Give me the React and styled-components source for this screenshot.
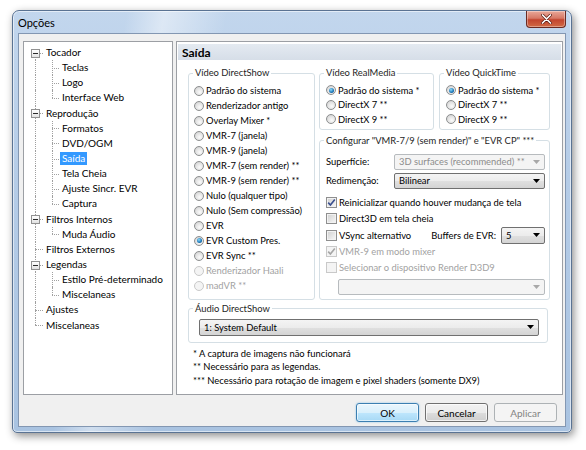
import React from 'react';
import styled, { createGlobalStyle, css } from 'styled-components';

const GlobalStyle = createGlobalStyle`
  html, body {
    margin: 0;
    padding: 0;
    background: #ffffff;
  }
  body {
    font-family: Lato, "Noto Sans", "DejaVu Sans", sans-serif;
    font-size: 10px;
    color: #000000;
  }
`;

const tree = [
    { label: 'Tocador', children: ['Teclas', 'Logo', 'Interface Web'] },
    {
        label: 'Reprodução',
        children: ['Formatos', 'DVD/OGM', 'Saída', 'Tela Cheia', 'Ajuste Sincr. EVR', 'Captura'],
    },
    { label: 'Filtros Internos', children: ['Muda Áudio'] },
    { label: 'Filtros Externos' },
    { label: 'Legendas', children: ['Estilo Pré-determinado', 'Miscelaneas'] },
    { label: 'Ajustes' },
    { label: 'Miscelaneas' },
];

const directShow = [
    { label: 'Padrão do sistema' },
    { label: 'Renderizador antigo' },
    { label: 'Overlay Mixer *' },
    { label: 'VMR-7 (janela)' },
    { label: 'VMR-9 (janela)' },
    { label: 'VMR-7 (sem render) **' },
    { label: 'VMR-9 (sem render) **' },
    { label: 'Nulo (qualquer tipo)' },
    { label: 'Nulo (Sem compressão)' },
    { label: 'EVR' },
    { label: 'EVR Custom Pres.', checked: true },
    { label: 'EVR Sync **' },
    { label: 'Renderizador Haali', disabled: true },
    { label: 'madVR **', disabled: true },
];

const altRenderers = [
    { label: 'Padrão do sistema *', checked: true },
    { label: 'DirectX 7 **' },
    { label: 'DirectX 9 **' },
];

function App() {
    return (
        <>
            <GlobalStyle />
            <Page>
                <Window>
                    <TitleBar>
                        <Title>Opções</Title>
                        <CloseButton>
                            <svg width="11" height="10" viewBox="0 0 11 10">
                                <path d="M1.5 1 L9.5 9 M9.5 1 L1.5 9" stroke="#5a1a12" strokeWidth="3" strokeLinecap="round" />
                                <path d="M1.5 1 L9.5 9 M9.5 1 L1.5 9" stroke="#ffffff" strokeWidth="1.7" strokeLinecap="round" />
                            </svg>
                        </CloseButton>
                    </TitleBar>
                    <Client>
                        <MainRow>
                            <Tree />
                            <Panel>
                                <PanelHeader>Saída</PanelHeader>
                                <PanelBody>
                                    <TopRow>
                                        <Group $w={127} $pt={4} $pr={4} $pb={4} $pl={5}>
                                            <Legend>Vídeo DirectShow</Legend>
                                            {directShow.map((o) => (
                                                <RadioOption key={o.label} {...o} />
                                            ))}
                                        </Group>
                                        <RightColumn>
                                            <RendererRow>
                                                <Group $w={115} $pt={4} $pr={4} $pb={2} $pl={6}>
                                                    <Legend>Vídeo RealMedia</Legend>
                                                    {altRenderers.map((o) => (
                                                        <RadioOption key={o.label} {...o} $h={14.5} />
                                                    ))}
                                                </Group>
                                                <Group $w={111} $pt={4} $pr={4} $pb={2} $pl={6}>
                                                    <Legend>Vídeo QuickTime</Legend>
                                                    {altRenderers.map((o) => (
                                                        <RadioOption key={o.label} {...o} $h={14.5} />
                                                    ))}
                                                </Group>
                                            </RendererRow>
                                            <Group $pt={7} $pr={4} $pb={4} $pl={6} $grow>
                                                <Legend>Configurar "VMR-7/9 (sem render)" e "EVR CP" ***</Legend>
                                                <FieldRow>
                                                    <FieldLabel>Superfície:</FieldLabel>
                                                    <Combo $w={151} $disabled>
                                                        3D surfaces (recommended) **
                                                    </Combo>
                                                </FieldRow>
                                                <FieldRow $gap={3}>
                                                    <FieldLabel>Redimenção:</FieldLabel>
                                                    <Combo $w={151}>Bilinear</Combo>
                                                </FieldRow>
                                                <CheckOption checked $gap={6}>
                                                    Reinicializar quando houver mudança de tela
                                                </CheckOption>
                                                <CheckOption>Direct3D em tela cheia</CheckOption>
                                                <BufferRow>
                                                    <CheckOption>VSync alternativo</CheckOption>
                                                    <BufferLabel>Buffers de EVR:</BufferLabel>
                                                    <Combo $w={44} $h={17}>
                                                        5
                                                    </Combo>
                                                </BufferRow>
                                                <CheckOption checked disabled>
                                                    VMR-9 em modo mixer
                                                </CheckOption>
                                                <CheckOption disabled>Selecionar o dispositivo Render D3D9</CheckOption>
                                                <DeviceCombo>
                                                    <Combo $w={207} $disabled />
                                                </DeviceCombo>
                                            </Group>
                                        </RightColumn>
                                    </TopRow>
                                    <Group $pt={4} $pr={4} $pb={6} $pl={10} $mt={3}>
                                        <Legend>Áudio DirectShow</Legend>
                                        <Combo $w={340} $h={17}>
                                            1: System Default
                                        </Combo>
                                    </Group>
                                    <Notes>
                                        <div>* A captura de imagens não funcionará</div>
                                        <div>** Necessário para as legendas.</div>
                                        <div>*** Necessário para rotação de imagem e pixel shaders (somente DX9)</div>
                                    </Notes>
                                </PanelBody>
                            </Panel>
                        </MainRow>
                        <ButtonRow>
                            <Button $default>OK</Button>
                            <Button>Cancelar</Button>
                            <Button $disabled>Aplicar</Button>
                        </ButtonRow>
                    </Client>
                </Window>
            </Page>
        </>
    );
}

function Tree() {
    const rows = [];
    tree.forEach((node, i) => {
        const first = i === 0;
        const last = i === tree.length - 1;
        rows.push(
            <TreeRow key={`r${i}`}>
                <Gutter $w={18} $x={9} $v={first ? 'bottom' : last ? 'top' : 'full'} $h>
                    {node.children && <ExpandBox />}
                </Gutter>
                <TreeLabel>{node.label}</TreeLabel>
            </TreeRow>
        );
        (node.children || []).forEach((child, j) => {
            const lastChild = j === node.children.length - 1;
            rows.push(
                <TreeRow key={`r${i}c${j}`}>
                    <Gutter $w={18} $x={9} $v={last ? 'none' : 'full'} />
                    <Gutter $w={16} $x={8} $v={lastChild ? 'top' : 'full'} $h />
                    <TreeLabel $selected={child === 'Saída'}>{child}</TreeLabel>
                </TreeRow>
            );
        });
    });
    return <TreeBox>{rows}</TreeBox>;
}

function RadioOption({ label, checked, disabled, $h }) {
    return (
        <OptionRow $h={$h} $disabled={disabled}>
            <RadioMark $checked={checked} $disabled={disabled} />
            {label}
        </OptionRow>
    );
}

function CheckOption({ children, checked, disabled, $gap }) {
    return (
        <OptionRow $h={16} $disabled={disabled} $mt={$gap}>
            <CheckMark $disabled={disabled}>
                {checked && (
                    <svg width="9" height="9" viewBox="0 0 9 9">
                        <path
                            d="M1.2 4.6 L3.4 7 L7.8 1.4"
                            fill="none"
                            stroke={disabled ? '#a6a6a6' : '#3a4f8f'}
                            strokeWidth="1.6"
                        />
                    </svg>
                )}
            </CheckMark>
            {children}
        </OptionRow>
    );
}

export default App;

const Page = styled.div`
    width: 586px;
    height: 450px;
    padding: 10px 0 0 12px;
    box-sizing: border-box;
    overflow: hidden;
`;

const Window = styled.div`
    width: 560px;
    height: 423px;
    box-sizing: border-box;
    display: flex;
    flex-direction: column;
    padding: 0 5px 5px 5px;
    border: 1px solid #5a7393;
    border-radius: 7px 7px 5px 5px;
    background:
        linear-gradient(100deg, rgba(255, 255, 255, 0) 18%, rgba(255, 255, 255, 0.45) 24%, rgba(255, 255, 255, 0) 34%),
        linear-gradient(#c2d6ed, #b5cce7 40%, #a9c3e1);
    box-shadow:
        inset 0 0 0 1px rgba(255, 255, 255, 0.55),
        2px 3px 9px rgba(0, 0, 0, 0.45);
`;

const TitleBar = styled.div`
    height: 22px;
    display: flex;
    align-items: center;
`;

const Title = styled.span`
    font-size: 11px;
    color: #000000;
    margin-top: 1px;
`;

const CloseButton = styled.div`
    margin-left: auto;
    align-self: flex-start;
    width: 40px;
    height: 17px;
    box-sizing: border-box;
    display: grid;
    place-items: center;
    border: 1px solid #6b2a22;
    border-top: none;
    border-radius: 0 0 4px 4px;
    background: linear-gradient(#e9a899, #d67866 45%, #c2452f 55%, #d16a45);
    box-shadow: inset 0 0 0 1px rgba(255, 255, 255, 0.35);
`;

const Client = styled.div`
    flex: 1;
    display: flex;
    flex-direction: column;
    background: #f0f0f0;
    border: 1px solid #8397b2;
    padding: 7px 2px 0 4px;
`;

const MainRow = styled.div`
    display: flex;
    gap: 3px;
    height: 354px;
`;

const TreeBox = styled.div`
    width: 150px;
    height: 100%;
    box-sizing: border-box;
    border: 1px solid #9c9fa4;
    background: #ffffff;
    padding: 3px 0 0 2px;
`;

const TreeRow = styled.div`
    display: flex;
    align-items: center;
    height: 15.15px;
`;

const Gutter = styled.span`
    position: relative;
    flex: none;
    width: ${(p) => p.$w}px;
    height: 100%;

    &::before {
        content: '';
        display: ${(p) => (p.$v === 'none' ? 'none' : 'block')};
        position: absolute;
        left: ${(p) => p.$x}px;
        top: ${(p) => (p.$v === 'bottom' ? '50%' : '0')};
        bottom: ${(p) => (p.$v === 'top' ? '50%' : '0')};
        border-left: 1px dotted #a0a0a0;
    }

    &::after {
        content: '';
        display: ${(p) => (p.$h ? 'block' : 'none')};
        position: absolute;
        left: ${(p) => p.$x}px;
        right: 1px;
        top: 50%;
        border-top: 1px dotted #a0a0a0;
    }
`;

const ExpandBox = styled.span`
    position: absolute;
    z-index: 1;
    left: 5px;
    top: calc(50% - 4px);
    width: 9px;
    height: 9px;
    box-sizing: border-box;
    border: 1px solid #919191;
    background: linear-gradient(#ffffff, #e2e2e2);

    &::after {
        content: '';
        position: absolute;
        left: 1px;
        right: 1px;
        top: 3px;
        height: 1px;
        background: #2a2a2a;
    }
`;

const TreeLabel = styled.span`
    padding: 0 2px;
    line-height: 13px;
    white-space: nowrap;
    background: ${(p) => (p.$selected ? '#3399ff' : 'transparent')};
    color: ${(p) => (p.$selected ? '#ffffff' : '#000000')};
`;

const Panel = styled.div`
    width: 387px;
    height: 100%;
    box-sizing: border-box;
    border: 1px solid #9c9fa4;
    background: #ffffff;
    padding: 2px 1px 0 1px;
    display: flex;
    flex-direction: column;
    font-size: 9.4px;
`;

const PanelHeader = styled.div`
    height: 16px;
    padding-left: 4px;
    display: flex;
    align-items: center;
    font-size: 12px;
    font-weight: bold;
    color: #000000;
    background: linear-gradient(#e4eaf1, #d6dee8);
`;

const PanelBody = styled.div`
    padding: 7px 13px 0 10px;
    display: flex;
    flex-direction: column;
`;

const TopRow = styled.div`
    display: flex;
    gap: 4px;
`;

const RightColumn = styled.div`
    width: 231px;
    display: flex;
    flex-direction: column;
    gap: 5px;
`;

const RendererRow = styled.div`
    display: flex;
    gap: 5px;
`;

const Group = styled.fieldset`
    margin: ${(p) => p.$mt || 0}px 0 0 0;
    padding: ${(p) => `${p.$pt}px ${p.$pr}px ${p.$pb}px ${p.$pl}px`};
    min-width: 0;
    box-sizing: border-box;
    width: ${(p) => (p.$w ? `${p.$w}px` : 'auto')};
    flex: ${(p) => (p.$grow ? 1 : 'none')};
    border: 1px solid #d5dfe5;
    border-radius: 3px;
    display: flex;
    flex-direction: column;

    & > legend {
        margin-left: ${(p) => 4 - p.$pl}px;
    }
`;

const Legend = styled.legend`
    padding: 0 2px;
    line-height: 12px;
    color: #1e1e1e;
    white-space: nowrap;
`;

const OptionRow = styled.div`
    display: flex;
    align-items: center;
    gap: 2px;
    height: ${(p) => p.$h || 15}px;
    margin-top: ${(p) => p.$mt || 0}px;
    white-space: nowrap;
    color: ${(p) => (p.$disabled ? '#a2a2a2' : '#000000')};
`;

const RadioMark = styled.span`
    flex: none;
    width: 10px;
    height: 10px;
    box-sizing: border-box;
    border-radius: 50%;
    border: 1px solid ${(p) => (p.$disabled ? '#c9c9c9' : '#8c8e8f')};
    background: ${(p) =>
        p.$disabled
            ? '#f4f4f4'
            : 'radial-gradient(circle at 60% 65%, #fbfbfb 0%, #e2e2e2 55%, #c8c8c8 100%)'};
    display: grid;
    place-items: center;

    &::after {
        content: '';
        display: ${(p) => (p.$checked ? 'block' : 'none')};
        width: 5px;
        height: 5px;
        border-radius: 50%;
        background: radial-gradient(circle at 40% 35%, #8fdcfb, #1a76b8 60%, #0b3f6e);
    }
`;

const CheckMark = styled.span`
    flex: none;
    width: 11px;
    height: 11px;
    box-sizing: border-box;
    border: 1px solid ${(p) => (p.$disabled ? '#c9c9c9' : '#8f8f8f')};
    background: ${(p) => (p.$disabled ? '#f4f4f4' : 'linear-gradient(135deg, #cfcfcf, #f8f8f8)')};
    box-shadow: inset 0 0 0 1px ${(p) => (p.$disabled ? '#f4f4f4' : '#f2f2f2')};
    display: grid;
    place-items: center;
`;

const FieldRow = styled.div`
    display: flex;
    align-items: center;
    margin-top: ${(p) => p.$gap || 0}px;
`;

const FieldLabel = styled.span`
    width: 68px;
    flex: none;
`;

const BufferRow = styled.div`
    display: flex;
    align-items: center;
    height: 17px;

    & > div:first-child {
        flex: 1;
    }
`;

const BufferLabel = styled.span`
    margin-right: 5px;
    white-space: nowrap;
`;

const DeviceCombo = styled.div`
    margin: 3px 0 0 12px;
`;

const ComboBox = styled.div`
    flex: none;
    display: flex;
    align-items: center;
    box-sizing: border-box;
    width: ${(p) => p.$w}px;
    height: ${(p) => p.$h || 16}px;
    padding: 0 4px;
    border: 1px solid ${(p) => (p.$disabled ? '#b7bbbe' : '#707070')};
    border-radius: 2px;
    background: ${(p) =>
        p.$disabled ? '#f4f4f4' : 'linear-gradient(#f4f4f4, #ececec 50%, #e0e0e0 51%, #d4d4d4)'};
    color: ${(p) => (p.$disabled ? '#8c8c8c' : '#000000')};
    white-space: nowrap;
    overflow: hidden;
`;

const ComboText = styled.span`
    flex: 1;
    overflow: hidden;
`;

function Combo({ children, $w, $h, $disabled }) {
    return (
        <ComboBox $w={$w} $h={$h} $disabled={$disabled}>
            <ComboText>{children}</ComboText>
            <svg width="7" height="4" viewBox="0 0 7 4">
                <path d="M0 0 H7 L3.5 4 Z" fill={$disabled ? '#a8a8a8' : '#000000'} />
            </svg>
        </ComboBox>
    );
}

const Notes = styled.div`
    margin-top: 4px;
    padding-left: 5px;
    line-height: 13.5px;
    color: #000000;
`;

const ButtonRow = styled.div`
    display: flex;
    justify-content: flex-end;
    gap: 6px;
    margin-top: 8px;
    padding-right: 6px;
`;

const Button = styled.button`
    width: 63px;
    height: 19px;
    box-sizing: border-box;
    padding: 0;
    font: inherit;
    color: #000000;
    border: 1px solid #707070;
    border-radius: 3px;
    background: linear-gradient(#f2f2f2, #ebebeb 50%, #dddddd 51%, #cfcfcf);
    box-shadow: inset 0 0 0 1px rgba(255, 255, 255, 0.7);

    ${(p) =>
        p.$default &&
        css`
            border-color: #3c7fb1;
            background: linear-gradient(#eaf6fd, #d9f0fc 50%, #bee6fd 51%, #a7d9f5);
            box-shadow: inset 0 0 0 1px rgba(255, 255, 255, 0.6), 0 0 2px rgba(60, 160, 230, 0.6);
        `}

    ${(p) =>
        p.$disabled &&
        css`
            border-color: #adb2b5;
            background: #f4f4f4;
            color: #838383;
            box-shadow: none;
        `}
`;
